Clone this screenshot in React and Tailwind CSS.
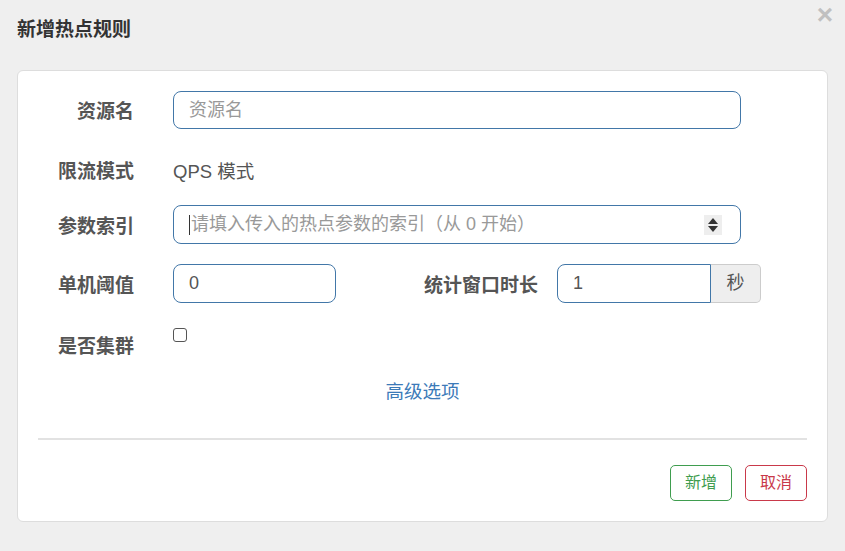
import React from 'react'

const font = { fontFamily: '"Liberation Sans", "Noto Sans CJK SC", sans-serif' }

const Label = ({ children, className = 'pt-[5px]' }) => (
    <div className={`w-[96px] shrink-0 text-right font-bold text-[19px] text-[#555] whitespace-nowrap ${className}`}>{children}</div>
)

export default function App() {
    return (
        <div style={font} className="w-[845px] h-[551px] bg-[#efefef] relative overflow-hidden">
            <div className="absolute right-[12px] top-[1px] text-[28px] font-bold text-[#c0c0c0] leading-none">×</div>

            <div className="px-[17px]">
                <div className="h-[70px] flex items-center pb-[9px]">
                    <h4 className="text-[19px] font-bold text-[#333]">新增热点规则</h4>
                </div>

                <div className="bg-white border border-[#ddd] rounded-[6px] pt-[20px] px-[20px] pb-[20px]">
                    {/* 资源名 */}
                    <div className="flex items-center h-[38px]">
                        <Label>资源名</Label>
                        <input
                            placeholder="资源名"
                            className="ml-[39px] w-[568px] h-[38px] px-[15px] border border-[#4277a8] rounded-[8px] text-[18px] text-[#555] placeholder:text-[#999] outline-none"
                        />
                    </div>

                    {/* 限流模式 */}
                    <div className="flex items-center h-[38px] mt-[24px]">
                        <Label className="pt-[1px]">限流模式</Label>
                        <div className="ml-[39px] text-[18.5px] text-[#555]">QPS 模式</div>
                    </div>

                    {/* 参数索引 */}
                    <div className="flex items-center h-[39px] mt-[14px]">
                        <Label>参数索引</Label>
                        <div className="ml-[39px] w-[568px] h-[39px] border border-[#4277a8] rounded-[8px] flex items-center pl-[15px] pr-[18px]">
                            <span className="w-px h-[20px] bg-[#333] mr-[1px]"></span>
                            <span className="flex-1 text-[18px] text-[#999] whitespace-nowrap">请填入传入的热点参数的索引（从 0 开始）</span>
                            <div className="w-[18px] h-[20px] bg-[#eee] flex flex-col items-center justify-center gap-[2px]">
                                <svg width="10" height="6" viewBox="0 0 10 6"><path d="M5 0 L10 6 L0 6 Z" fill="#333" /></svg>
                                <svg width="10" height="6" viewBox="0 0 10 6"><path d="M0 0 L10 0 L5 6 Z" fill="#333" /></svg>
                            </div>
                        </div>
                    </div>

                    {/* 单机阈值 / 统计窗口时长 */}
                    <div className="flex items-center h-[39px] mt-[20px]">
                        <Label>单机阈值</Label>
                        <input
                            defaultValue="0"
                            className="ml-[39px] w-[163px] h-[39px] px-[15px] border border-[#4277a8] rounded-[8px] text-[18px] text-[#555] outline-none"
                        />
                        <div className="w-[202px] shrink-0 pt-[5px] text-right font-bold text-[19px] text-[#555] whitespace-nowrap">统计窗口时长</div>
                        <div className="ml-[19px] flex h-[39px]">
                            <input
                                defaultValue="1"
                                className="w-[154px] h-[39px] px-[15px] border border-[#4277a8] rounded-l-[8px] text-[18px] text-[#555] outline-none"
                            />
                            <div className="w-[50px] h-[39px] bg-[#eee] border border-l-0 border-[#ccc] rounded-r-[5px] flex items-center justify-center text-[18px] text-[#555]">秒</div>
                        </div>
                    </div>

                    {/* 是否集群 */}
                    <div className="flex items-start mt-[20px] h-[40px]">
                        <Label className="pt-[10px] leading-[28px]">是否集群</Label>
                        <div className="ml-[39px] mt-[5px] w-[14px] h-[14px] border border-[#555] rounded-[3px] bg-white"></div>
                    </div>

                    {/* 高级选项 */}
                    <div className="mt-[15px] h-[28px] flex items-center justify-center">
                        <a className="text-[18.5px] text-[#3c7ab8]">高级选项</a>
                    </div>

                    <div className="mt-[32px] h-[2px] bg-[#e2e2e2]"></div>

                    <div className="mt-[25px] flex justify-end gap-[13px]">
                        <button className="w-[62px] h-[36px] border border-[#3f9d4f] rounded-[5px] text-[16px] text-[#3f9d4f] bg-white">新增</button>
                        <button className="w-[62px] h-[36px] border border-[#c9394a] rounded-[5px] text-[16px] text-[#c9394a] bg-white">取消</button>
                    </div>
                </div>
            </div>
        </div>
    )
}
